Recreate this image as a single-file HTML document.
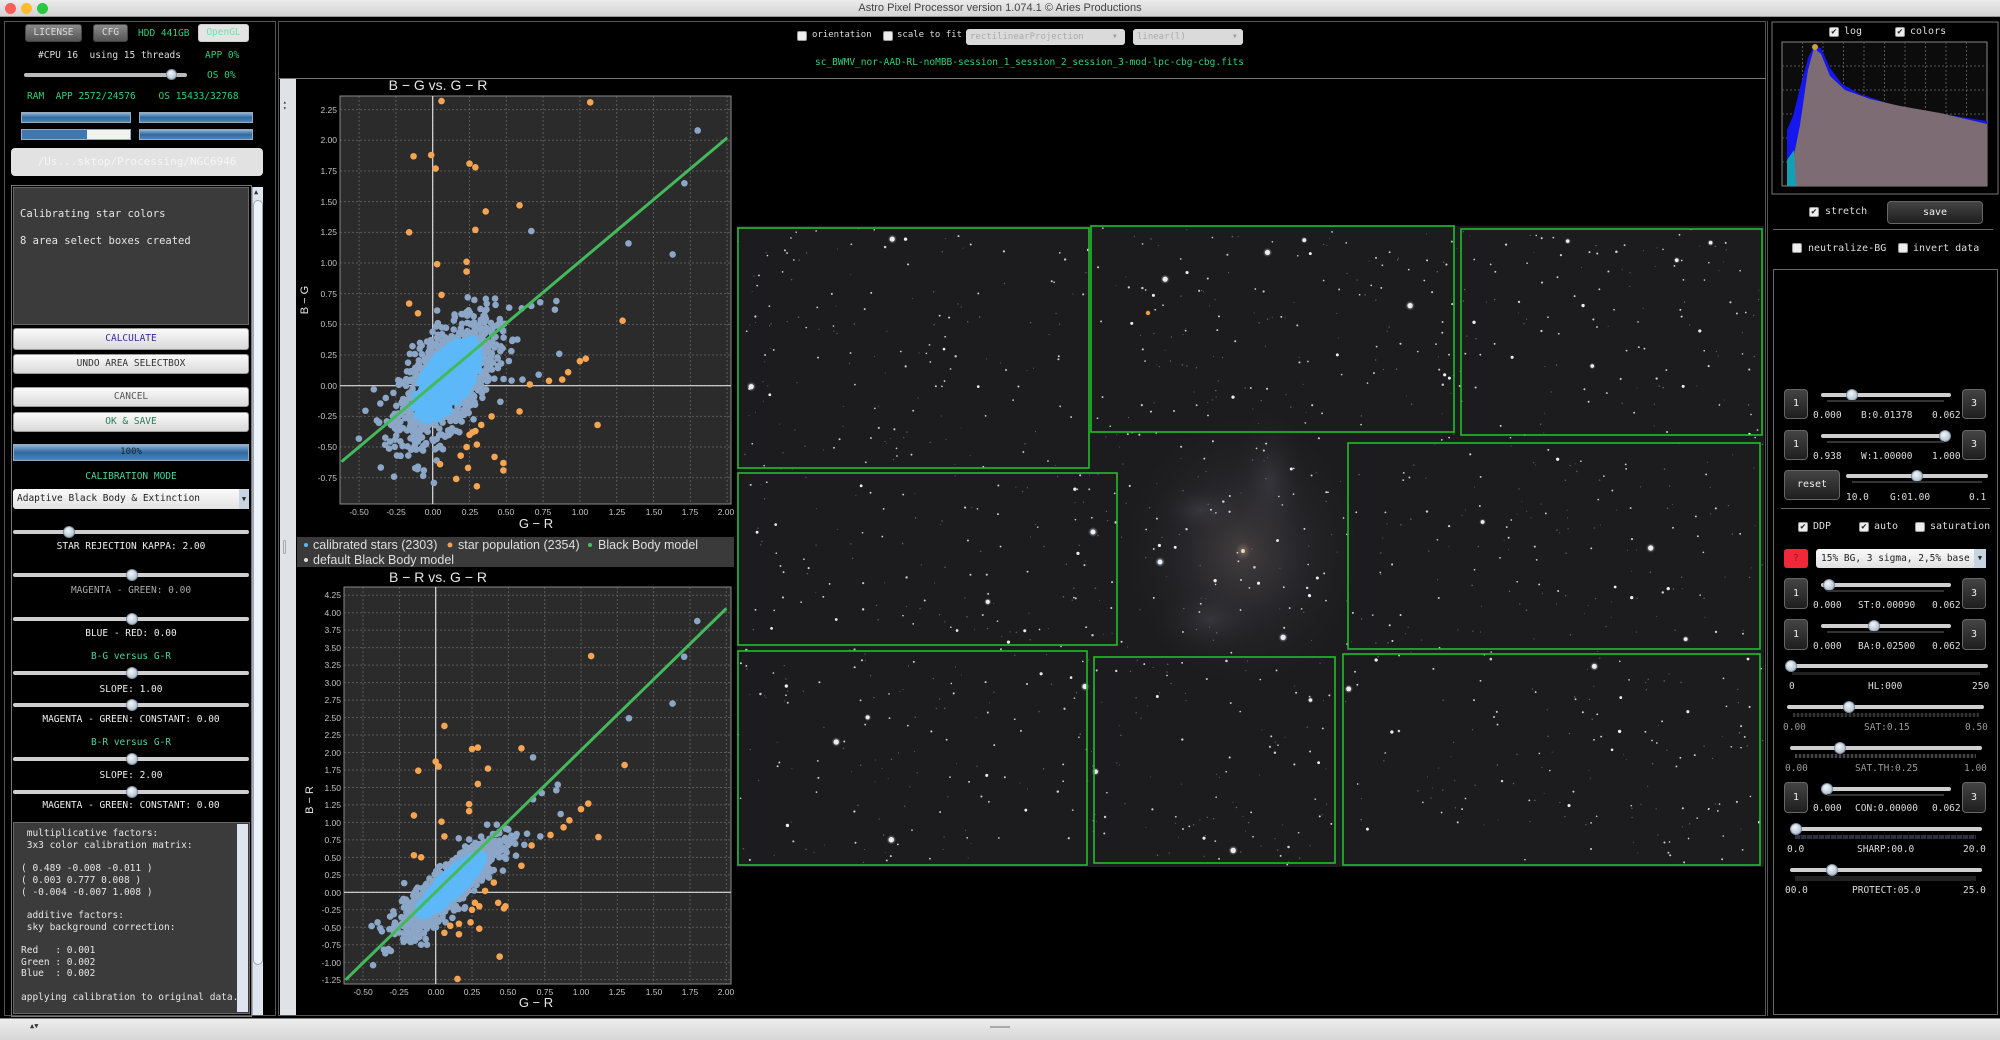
<!DOCTYPE html>
<html><head><meta charset="utf-8">
<style>
*{margin:0;padding:0;box-sizing:border-box}
body{width:2000px;height:1040px;overflow:hidden;background:#000;position:relative;font-family:"DejaVu Sans Mono","Liberation Mono",monospace;font-size:9.5px;color:#ddd}
.a{position:absolute}
.btn{position:absolute;background:linear-gradient(#fafafa,#d9d9d9);border:1px solid #9a9a9a;border-radius:3px;color:#333;text-align:center;font-size:9.5px}
.dk{position:absolute;background:linear-gradient(#444,#1e1e1e);border:1px solid #666;border-radius:4px;color:#eee;text-align:center;font-size:10px}
.c{position:absolute;text-align:center;white-space:nowrap}
.tr{position:absolute;height:4px;background:#cfcfcf;border-radius:2px}
.kn{position:absolute;width:12px;height:12px;border-radius:6px;background:radial-gradient(circle at 40% 35%,#f2f6fa,#9fb0c2);border:1px solid #7d8ea0}
.cb{position:absolute;width:10px;height:10px;background:#eee;border:1px solid #999;border-radius:2px;color:#222;font-size:9px;line-height:9px;text-align:center}
.bar{position:absolute;height:11px;background:linear-gradient(#8fb3d6,#2f6aa0 50%,#4a85bd);border:1px solid #9ab}
</style></head><body>

<div class="a" style="left:0;top:0;width:2000px;height:17px;background:linear-gradient(#ececec,#d3d3d3);border-bottom:1px solid #999"></div>
<div class="a" style="left:5px;top:3px;width:11px;height:11px;border-radius:6px;background:#fc5f57"></div>
<div class="a" style="left:21px;top:3px;width:11px;height:11px;border-radius:6px;background:#fdbc2e"></div>
<div class="a" style="left:37px;top:3px;width:11px;height:11px;border-radius:6px;background:#28c840"></div>
<div class="c" style="left:0;width:2000px;top:2px;font-family:'Liberation Sans',sans-serif;font-size:11px;color:#444">Astro Pixel Processor version 1.074.1 © Aries Productions</div>

<div class="a" style="left:0;top:1018px;width:2000px;height:22px;background:linear-gradient(#ececec,#d8d8d8);border-top:1px solid #888"></div>
<div class="a" style="left:30px;top:1022px;font-size:7px;color:#333">▲▼</div>
<div class="a" style="left:990px;top:1026px;width:20px;height:2px;background:#aaa"></div>

<div class="a" style="left:4px;top:21px;width:272px;height:995px;border:1px solid #555"></div>
<div class="btn" style="left:25px;top:24px;width:57px;height:18px;line-height:16px;background:linear-gradient(#8a8a8a,#555);color:#ddd;border-color:#444">LICENSE</div>
<div class="btn" style="left:93px;top:24px;width:35px;height:18px;line-height:16px;background:linear-gradient(#8a8a8a,#555);color:#ddd;border-color:#444">CFG</div>
<div class="a" style="left:138px;top:28px;color:#2fd07a">HDD 441GB</div>
<div class="btn" style="left:198px;top:24px;width:51px;height:18px;line-height:16px;background:#e4e4e4;color:#6fe0b0;border-color:#ccc">OpenGL</div>
<div class="a" style="left:38px;top:50px;color:#ddd">#CPU 16&nbsp; using 15 threads</div>
<div class="a" style="left:205px;top:50px;color:#2fd07a">APP 0%</div>
<div class="tr" style="left:24px;top:73px;width:163px;background:#bbb"></div>
<div class="kn" style="left:166px;top:69px;width:11px;height:11px"></div>
<div class="a" style="left:207px;top:70px;color:#2fd07a">OS 0%</div>
<div class="a" style="left:27px;top:91px;color:#2fd07a">RAM&nbsp; APP 2572/24576&nbsp;&nbsp;&nbsp; OS 15433/32768</div>
<div class="bar" style="left:21px;top:112px;width:110px"></div>
<div class="bar" style="left:139px;top:112px;width:114px"></div>
<div class="bar" style="left:21px;top:129px;width:110px;background:linear-gradient(90deg,#3f78b0 0,#3f78b0 60%,#f2f2f2 60%)"></div>
<div class="bar" style="left:139px;top:129px;width:114px"></div>
<div class="a" style="left:11px;top:148px;width:252px;height:28px;background:#e2e2e2;border-radius:4px;color:#f6f6f6;font-size:11px;line-height:28px;text-align:center">/Us...sktop/Processing/NGC6946</div>

<div class="a" style="left:11px;top:185px;width:241px;height:832px;border:1px solid #777"></div>
<div class="a" style="left:13px;top:187px;width:236px;height:138px;background:#3b3b3b;border:1px solid #666"></div>
<div class="a" style="left:20px;top:208px;font-size:10.5px;color:#e6e6e6">Calibrating star colors</div>
<div class="a" style="left:20px;top:235px;font-size:10.5px;color:#e6e6e6">8 area select boxes created</div>
<div class="a" style="left:252px;top:187px;width:11px;height:828px;background:#dfe5ee;border-left:1px solid #aab"></div>
<div class="a" style="left:253px;top:200px;width:10px;height:765px;background:#eef3f9;border:1px solid #98a8bb;border-radius:5px"></div>
<div class="a" style="left:254px;top:188px;font-size:7px;color:#333">▲</div>

<div class="btn" style="left:13px;top:328px;width:236px;height:22px;line-height:20px;color:#3b2aa0">CALCULATE</div>
<div class="btn" style="left:13px;top:354px;width:236px;height:20px;line-height:18px">UNDO AREA SELECTBOX</div>
<div class="btn" style="left:13px;top:387px;width:236px;height:20px;line-height:18px;color:#555">CANCEL</div>
<div class="btn" style="left:13px;top:412px;width:236px;height:20px;line-height:18px;color:#2a7a5a">OK &amp; SAVE</div>
<div class="bar" style="left:13px;top:444px;width:236px;height:17px;text-align:center;line-height:15px;color:#123;font-size:9px">100%</div>
<div class="c" style="left:13px;width:236px;top:471px;color:#4fd0a0">CALIBRATION MODE</div>
<div class="a" style="left:13px;top:489px;width:236px;height:20px;background:linear-gradient(#fafafa,#e2e2e2);border-radius:3px;color:#222;font-size:9.5px;line-height:20px;padding-left:4px">Adaptive Black Body &amp; Extinction</div>
<div class="a" style="left:239px;top:489px;width:10px;height:20px;background:#c8d4e2;font-size:7px;color:#222;line-height:20px;text-align:center">▼</div>

<div class="tr" style="left:13px;top:530px;width:236px"></div><div class="kn" style="left:63px;top:526px"></div>
<div class="c" style="left:13px;width:236px;top:541px;color:#eee">STAR REJECTION KAPPA: 2.00</div>
<div class="tr" style="left:13px;top:573px;width:236px"></div><div class="kn" style="left:126px;top:569px"></div>
<div class="c" style="left:13px;width:236px;top:585px;color:#aaa">MAGENTA - GREEN: 0.00</div>
<div class="tr" style="left:13px;top:617px;width:236px"></div><div class="kn" style="left:126px;top:613px"></div>
<div class="c" style="left:13px;width:236px;top:628px;color:#eee">BLUE - RED: 0.00</div>
<div class="c" style="left:13px;width:236px;top:651px;color:#4fd0a0">B-G versus G-R</div>
<div class="tr" style="left:13px;top:671px;width:236px"></div><div class="kn" style="left:126px;top:667px"></div>
<div class="c" style="left:13px;width:236px;top:684px;color:#eee">SLOPE: 1.00</div>
<div class="tr" style="left:13px;top:703px;width:236px"></div><div class="kn" style="left:126px;top:699px"></div>
<div class="c" style="left:13px;width:236px;top:714px;color:#eee">MAGENTA - GREEN: CONSTANT: 0.00</div>
<div class="c" style="left:13px;width:236px;top:737px;color:#4fd0a0">B-R versus G-R</div>
<div class="tr" style="left:13px;top:757px;width:236px"></div><div class="kn" style="left:126px;top:753px"></div>
<div class="c" style="left:13px;width:236px;top:770px;color:#eee">SLOPE: 2.00</div>
<div class="tr" style="left:13px;top:790px;width:236px"></div><div class="kn" style="left:126px;top:786px"></div>
<div class="c" style="left:13px;width:236px;top:800px;color:#eee">MAGENTA - GREEN: CONSTANT: 0.00</div>

<div class="a" style="left:13px;top:822px;width:237px;height:192px;background:#3b3b3b;border:1px solid #666"></div>
<div class="a" style="left:237px;top:824px;width:11px;height:188px;background:#dfe5ee"></div>
<div class="a" style="left:21px;top:828px;font-size:9.5px;line-height:11.7px;color:#e6e6e6;white-space:pre"> multiplicative factors:
 3x3 color calibration matrix:

( 0.489 -0.008 -0.011 )
( 0.003 0.777 0.008 )
( -0.004 -0.007 1.008 )

 additive factors:
 sky background correction:

Red   : 0.001
Green : 0.002
Blue  : 0.002

applying calibration to original data..</div>

<div class="a" style="left:278px;top:21px;width:1488px;height:995px;border:1px solid #555"></div>
<div class="cb" style="left:797px;top:31px"></div>
<div class="a" style="left:812px;top:30px;font-size:9px;color:#ddd">orientation</div>
<div class="cb" style="left:883px;top:31px"></div>
<div class="a" style="left:897px;top:30px;font-size:9px;color:#ddd">scale to fit</div>
<div class="a" style="left:966px;top:29px;width:159px;height:16px;background:#dadada;border-radius:3px;color:#aaa;font-size:9px;line-height:16px;padding-left:4px">rectilinearProjection</div>
<div class="a" style="left:1113px;top:29px;font-size:6px;color:#999;line-height:16px">▼</div>
<div class="a" style="left:1133px;top:29px;width:110px;height:16px;background:#dadada;border-radius:3px;color:#aaa;font-size:9px;line-height:16px;padding-left:4px">linear(l)</div>
<div class="a" style="left:1233px;top:29px;font-size:6px;color:#999;line-height:16px">▼</div>
<div class="a" style="left:815px;top:57px;font-size:9.5px;color:#2fd07a">sc_BWMV_nor-AAD-RL-noMBB-session_1_session_2_session_3-mod-lpc-cbg-cbg.fits</div>
<div class="a" style="left:279px;top:78px;width:1487px;height:1px;background:#777"></div>
<div class="a" style="left:280px;top:79px;width:16px;height:936px;background:#dfe2e6"></div>
<div class="a" style="left:283px;top:100px;font-size:6px;color:#333;line-height:6px">▴<br>▾</div>
<div class="a" style="left:283px;top:540px;width:3px;height:14px;border:1px solid #aaa;border-radius:2px"></div>

<svg id="g" class="a" style="left:0;top:0" width="2000" height="1040" xmlns="http://www.w3.org/2000/svg" font-family="Liberation Sans, sans-serif">
<rect x="340" y="96" width="391" height="408" fill="#2b2b2b"/>
<rect x="344" y="587" width="387" height="397" fill="#2b2b2b"/>
<g id="grid"></g>
<g id="dots"></g>
<text x="438" y="90" fill="#e6e6e6" font-size="14" text-anchor="middle">B − G  vs.  G − R</text>
<text x="438" y="582" fill="#e6e6e6" font-size="14" text-anchor="middle">B − R  vs.  G − R</text>
<text x="536" y="528" fill="#e6e6e6" font-size="13" text-anchor="middle">G − R</text>
<text x="536" y="1007" fill="#e6e6e6" font-size="13" text-anchor="middle">G − R</text>
<text transform="translate(308,300) rotate(-90)" fill="#e6e6e6" font-size="11" text-anchor="middle">B − G</text>
<text transform="translate(313,800) rotate(-90)" fill="#e6e6e6" font-size="11" text-anchor="middle">B − R</text>
<g fill="#c4c4c4" font-size="8.5" text-anchor="middle">
<text x="359" y="515">-0.50</text><text x="396" y="515">-0.25</text><text x="433" y="515">0.00</text><text x="470" y="515">0.25</text><text x="506" y="515">0.50</text><text x="543" y="515">0.75</text><text x="580" y="515">1.00</text><text x="617" y="515">1.25</text><text x="654" y="515">1.50</text><text x="690" y="515">1.75</text><text x="726" y="515">2.00</text>
<text x="363" y="995">-0.50</text><text x="399" y="995">-0.25</text><text x="436" y="995">0.00</text><text x="472" y="995">0.25</text><text x="508" y="995">0.50</text><text x="545" y="995">0.75</text><text x="581" y="995">1.00</text><text x="617" y="995">1.25</text><text x="654" y="995">1.50</text><text x="690" y="995">1.75</text><text x="726" y="995">2.00</text>
</g>
<g fill="#c4c4c4" font-size="8.5" text-anchor="end">
<text x="337" y="113">2.25</text><text x="337" y="143">2.00</text><text x="337" y="174">1.75</text><text x="337" y="205">1.50</text><text x="337" y="235">1.25</text><text x="337" y="266">1.00</text><text x="337" y="297">0.75</text><text x="337" y="327">0.50</text><text x="337" y="358">0.25</text><text x="337" y="389">0.00</text><text x="337" y="419">-0.25</text><text x="337" y="450">-0.50</text><text x="337" y="481">-0.75</text>
<text x="341" y="598">4.25</text><text x="341" y="616">4.00</text><text x="341" y="633">3.75</text><text x="341" y="651">3.50</text><text x="341" y="668">3.25</text><text x="341" y="686">3.00</text><text x="341" y="703">2.75</text><text x="341" y="721">2.50</text><text x="341" y="738">2.25</text><text x="341" y="756">2.00</text><text x="341" y="773">1.75</text><text x="341" y="791">1.50</text><text x="341" y="808">1.25</text><text x="341" y="826">1.00</text><text x="341" y="843">0.75</text><text x="341" y="861">0.50</text><text x="341" y="878">0.25</text><text x="341" y="896">0.00</text><text x="341" y="913">-0.25</text><text x="341" y="931">-0.50</text><text x="341" y="948">-0.75</text><text x="341" y="966">-1.00</text><text x="341" y="983">-1.25</text>
</g>
<rect x="297" y="537" width="437" height="30" fill="#3a3a3a"/>
<g font-size="12.5" fill="#dedede">
<circle cx="306" cy="545" r="2" fill="#5cb6f7"/><text x="313" y="549">calibrated stars (2303)</text>
<circle cx="450" cy="545" r="2.5" fill="#f0a050"/><text x="458" y="549">star population (2354)</text>
<circle cx="590" cy="545" r="2" fill="#4cc060"/><text x="598" y="549">Black Body model</text>
<circle cx="306" cy="560" r="2" fill="#ddd"/><text x="313" y="564">default Black Body model</text>
</g>
<rect x="737" y="226" width="1027" height="641" fill="#1c1c1e"/>
<defs><radialGradient id="gal"><stop offset="0" stop-color="#a89080" stop-opacity=".7"/><stop offset=".06" stop-color="#6a6060" stop-opacity=".45"/><stop offset=".45" stop-color="#3a3a42" stop-opacity=".35"/><stop offset="1" stop-color="#1c1c1e" stop-opacity="0"/></radialGradient>
<radialGradient id="arm"><stop offset="0" stop-color="#55555e" stop-opacity=".35"/><stop offset="1" stop-color="#1c1c1e" stop-opacity="0"/></radialGradient>
<radialGradient id="st"><stop offset="0" stop-color="#fff" stop-opacity=".7"/><stop offset="1" stop-color="#fff" stop-opacity="0"/></radialGradient></defs>
<ellipse cx="1243" cy="551" rx="130" ry="150" fill="url(#gal)"/>
<ellipse cx="1270" cy="480" rx="40" ry="80" fill="url(#arm)"/>
<ellipse cx="1210" cy="620" rx="60" ry="40" fill="url(#arm)"/>
<ellipse cx="1200" cy="510" rx="50" ry="30" fill="url(#arm)"/>
<g id="stars"></g>
<g fill="none" stroke="#1fbf2a" stroke-width="1.6">
<rect x="738" y="228" width="351" height="240"/>
<rect x="1091" y="226" width="363" height="206"/>
<rect x="1461" y="229" width="301" height="206"/>
<rect x="738" y="473" width="379" height="172"/>
<rect x="1348" y="443" width="412" height="206"/>
<rect x="738" y="651" width="349" height="214"/>
<rect x="1094" y="657" width="241" height="206"/>
<rect x="1343" y="654" width="417" height="211"/>
</g>
<rect x="1772" y="22" width="226" height="172" fill="#000" stroke="#777"/>
<rect x="1782" y="42" width="205" height="144" fill="#0c0c0c" stroke="#888"/>
<g id="hg" stroke="#555" stroke-dasharray="2,2" stroke-width="1"></g>
<polygon fill="#1616ee" points="1787,186 1787,130 1793,116 1800,88 1808,58 1814,46 1821,48 1830,68 1842,84 1860,94 1890,104 1930,112 1987,121 1987,186"/>
<polygon fill="#7e6c74" points="1791,186 1793,160 1800,125 1808,70 1814,48 1821,54 1830,76 1845,90 1870,99 1900,106 1940,113 1987,124 1987,186"/>
<polygon fill="#12a0b4" points="1787,186 1787,160 1794,150 1796,186"/>
<circle cx="1815" cy="47" r="3" fill="#c8a040"/>
</svg>

<div class="a" style="left:1767px;top:21px;width:232px;height:995px;border-left:1px solid #555"></div>
<div class="cb" style="left:1829px;top:27px">✔</div><div class="a" style="left:1844px;top:26px;font-size:10px">log</div>
<div class="cb" style="left:1895px;top:27px">✔</div><div class="a" style="left:1910px;top:26px;font-size:10px">colors</div>
<div class="cb" style="left:1809px;top:207px">✔</div><div class="a" style="left:1825px;top:206px;font-size:10px">stretch</div>
<div class="dk" style="left:1887px;top:201px;width:96px;height:23px;line-height:21px">save</div>
<div class="a" style="left:1773px;top:229px;width:220px;height:1px;background:#666"></div>
<div class="cb" style="left:1792px;top:243px"></div><div class="a" style="left:1808px;top:243px;font-size:10px">neutralize-BG</div>
<div class="cb" style="left:1898px;top:243px"></div><div class="a" style="left:1913px;top:243px;font-size:10px">invert data</div>
<div class="a" style="left:1773px;top:269px;width:225px;height:746px;border:1px solid #666"></div>

<div class="dk" style="left:1784px;top:389px;width:24px;height:30px;line-height:28px">1</div>
<div class="dk" style="left:1962px;top:389px;width:24px;height:30px;line-height:28px">3</div>
<div class="tr" style="left:1821px;top:393px;width:130px"></div><div class="kn" style="left:1846px;top:389px"></div>
<div class="a" style="left:1827px;top:400px;width:117px;height:2px;background:#333"></div>
<div class="a" style="left:1813px;top:410px;font-size:9.5px">0.000</div><div class="a" style="left:1861px;top:410px;font-size:9.5px">B:0.01378</div><div class="a" style="left:1932px;top:410px;font-size:9.5px">0.062</div>
<div class="dk" style="left:1784px;top:430px;width:24px;height:30px;line-height:28px">1</div>
<div class="dk" style="left:1962px;top:430px;width:24px;height:30px;line-height:28px">3</div>
<div class="tr" style="left:1821px;top:434px;width:130px"></div><div class="kn" style="left:1939px;top:430px"></div>
<div class="a" style="left:1827px;top:441px;width:117px;height:2px;background:#333"></div>
<div class="a" style="left:1813px;top:451px;font-size:9.5px">0.938</div><div class="a" style="left:1861px;top:451px;font-size:9.5px">W:1.00000</div><div class="a" style="left:1932px;top:451px;font-size:9.5px">1.000</div>
<div class="dk" style="left:1784px;top:470px;width:56px;height:30px;line-height:28px">reset</div>
<div class="tr" style="left:1846px;top:474px;width:142px"></div><div class="kn" style="left:1911px;top:470px"></div>
<div class="a" style="left:1852px;top:481px;width:130px;height:2px;background:#333"></div>
<div class="a" style="left:1846px;top:492px;font-size:9.5px">10.0</div><div class="a" style="left:1890px;top:492px;font-size:9.5px">G:01.00</div><div class="a" style="left:1969px;top:492px;font-size:9.5px">0.1</div>
<div class="a" style="left:1781px;top:508px;width:209px;height:1px;background:#666"></div>

<div class="cb" style="left:1798px;top:522px">✔</div><div class="a" style="left:1813px;top:521px;font-size:10px">DDP</div>
<div class="cb" style="left:1859px;top:522px">✔</div><div class="a" style="left:1874px;top:521px;font-size:10px">auto</div>
<div class="cb" style="left:1915px;top:522px"></div><div class="a" style="left:1930px;top:521px;font-size:10px">saturation</div>
<div class="a" style="left:1784px;top:549px;width:24px;height:19px;background:#f0283a;border-radius:3px;color:#a01020;text-align:center;line-height:19px">?</div>
<div class="a" style="left:1816px;top:549px;width:170px;height:19px;background:linear-gradient(#fafafa,#e0e0e0);border-radius:3px;color:#222;font-size:9.5px;line-height:19px;padding-left:5px">15% BG, 3 sigma, 2,5% base</div>
<div class="a" style="left:1974px;top:549px;width:12px;height:19px;background:#c8d4e2;font-size:7px;color:#222;line-height:19px;text-align:center">▼</div>

<div class="dk" style="left:1784px;top:578px;width:24px;height:31px;line-height:29px">1</div>
<div class="dk" style="left:1962px;top:578px;width:24px;height:31px;line-height:29px">3</div>
<div class="tr" style="left:1821px;top:583px;width:130px"></div><div class="kn" style="left:1823px;top:579px"></div>
<div class="a" style="left:1827px;top:590px;width:117px;height:2px;background:#333"></div>
<div class="a" style="left:1813px;top:600px;font-size:9.5px">0.000</div><div class="a" style="left:1858px;top:600px;font-size:9.5px">ST:0.00090</div><div class="a" style="left:1932px;top:600px;font-size:9.5px">0.062</div>
<div class="dk" style="left:1784px;top:619px;width:24px;height:31px;line-height:29px">1</div>
<div class="dk" style="left:1962px;top:619px;width:24px;height:31px;line-height:29px">3</div>
<div class="tr" style="left:1821px;top:624px;width:130px"></div><div class="kn" style="left:1868px;top:620px"></div>
<div class="a" style="left:1827px;top:631px;width:117px;height:2px;background:#333"></div>
<div class="a" style="left:1813px;top:641px;font-size:9.5px">0.000</div><div class="a" style="left:1858px;top:641px;font-size:9.5px">BA:0.02500</div><div class="a" style="left:1932px;top:641px;font-size:9.5px">0.062</div>

<div class="tr" style="left:1786px;top:664px;width:202px"></div><div class="kn" style="left:1785px;top:660px"></div>
<div class="a" style="left:1792px;top:672px;width:188px;height:3px;background:#222"></div>
<div class="a" style="left:1789px;top:681px;font-size:9.5px">0</div><div class="a" style="left:1868px;top:681px;font-size:9.5px">HL:000</div><div class="a" style="left:1972px;top:681px;font-size:9.5px">250</div>
<div class="tr" style="left:1787px;top:705px;width:197px"></div><div class="kn" style="left:1843px;top:701px"></div>
<div class="a" style="left:1793px;top:713px;width:186px;height:4px;background:repeating-linear-gradient(90deg,#333 0 2px,#111 2px 4px)"></div>
<div class="a" style="left:1783px;top:722px;font-size:9.5px;color:#999">0.00</div><div class="a" style="left:1864px;top:722px;font-size:9.5px;color:#999">SAT:0.15</div><div class="a" style="left:1965px;top:722px;font-size:9.5px;color:#999">0.50</div>
<div class="tr" style="left:1790px;top:746px;width:192px"></div><div class="kn" style="left:1834px;top:742px"></div>
<div class="a" style="left:1795px;top:754px;width:181px;height:4px;background:repeating-linear-gradient(90deg,#444 0 2px,#111 2px 4px)"></div>
<div class="a" style="left:1785px;top:763px;font-size:9.5px;color:#999">0.00</div><div class="a" style="left:1855px;top:763px;font-size:9.5px;color:#999">SAT.TH:0.25</div><div class="a" style="left:1964px;top:763px;font-size:9.5px;color:#999">1.00</div>

<div class="dk" style="left:1784px;top:782px;width:24px;height:31px;line-height:29px">1</div>
<div class="dk" style="left:1962px;top:782px;width:24px;height:31px;line-height:29px">3</div>
<div class="tr" style="left:1821px;top:787px;width:130px"></div><div class="kn" style="left:1821px;top:783px"></div>
<div class="a" style="left:1827px;top:794px;width:117px;height:2px;background:#333"></div>
<div class="a" style="left:1813px;top:803px;font-size:9.5px">0.000</div><div class="a" style="left:1855px;top:803px;font-size:9.5px">CON:0.00000</div><div class="a" style="left:1932px;top:803px;font-size:9.5px">0.062</div>
<div class="tr" style="left:1790px;top:827px;width:192px"></div><div class="kn" style="left:1790px;top:823px"></div>
<div class="a" style="left:1795px;top:835px;width:181px;height:4px;background:repeating-linear-gradient(90deg,#2a3040 0 5px,#111 5px 6px)"></div>
<div class="a" style="left:1787px;top:844px;font-size:9.5px">0.0</div><div class="a" style="left:1857px;top:844px;font-size:9.5px">SHARP:00.0</div><div class="a" style="left:1963px;top:844px;font-size:9.5px">20.0</div>
<div class="tr" style="left:1790px;top:868px;width:192px"></div><div class="kn" style="left:1826px;top:864px"></div>
<div class="a" style="left:1795px;top:876px;width:181px;height:5px;background:#222"></div>
<div class="a" style="left:1785px;top:885px;font-size:9.5px">00.0</div><div class="a" style="left:1852px;top:885px;font-size:9.5px">PROTECT:05.0</div><div class="a" style="left:1963px;top:885px;font-size:9.5px">25.0</div>

<script>
(function(){
var NS="http://www.w3.org/2000/svg";
var s=12345;function r(){s=(s*1103515245+12345)&0x7fffffff;return s/0x7fffffff;}
function g(){var u=r()||1e-6,v=r();return Math.sqrt(-2*Math.log(u))*Math.cos(2*Math.PI*v);}
function el(p,t,a){var e=document.createElementNS(NS,t);for(var k in a)e.setAttribute(k,a[k]);p.appendChild(e);return e;}
var grid=document.getElementById('grid'),dots=document.getElementById('dots');
var P=[{x0:432.7,sx:147.2,y0:385.7,sy:122.7,L:340,R:731,T:96,B:504,ymin:-0.75,ymax:2.25,k:1.0},
       {x0:435.7,sx:145.3,y0:892.3,sy:69.9,L:344,R:731,T:587,B:984,ymin:-1.25,ymax:4.25,k:2.02}];
P.forEach(function(p){
 for(var v=-0.5;v<=2.001;v+=0.25){var x=p.x0+v*p.sx;el(grid,'line',{x1:x,x2:x,y1:p.T,y2:p.B,stroke:'#5a5a5a','stroke-dasharray':'2,2'});}
 for(var v=p.ymin;v<=p.ymax+0.001;v+=0.25){var y=p.y0-v*p.sy;el(grid,'line',{x1:p.L,x2:p.R,y1:y,y2:y,stroke:'#5a5a5a','stroke-dasharray':'2,2'});}
 el(grid,'rect',{x:p.L,y:p.T,width:p.R-p.L,height:p.B-p.T,fill:'none',stroke:'#888'});
 el(grid,'line',{x1:p.x0,x2:p.x0,y1:p.T,y2:p.B,stroke:'#ddd','stroke-width':1.2});
 el(grid,'line',{x1:p.L,x2:p.R,y1:p.y0,y2:p.y0,stroke:'#ddd','stroke-width':1.2});
});
var O1=[[0.06,2.32],[1.07,2.31],[-0.13,1.87],[-0.01,1.88],[0.02,1.77],[0.25,1.81],[0.29,1.78],[0.59,1.47],[0.36,1.42],[-0.16,1.25],[0.29,1.27],[0.03,0.99],[0.23,1.01],[0.23,0.93],[0.06,0.74],[-0.16,0.67],[-0.1,0.59],[1.29,0.53],[1.0,0.2],[1.04,0.22],[0.92,0.11],[0.88,0.05],[0.79,0.04],[0.66,0.01],[0.59,-0.21],[1.12,-0.32],[0.4,-0.25],[0.33,-0.32],[0.27,-0.38],[0.23,-0.5],[0.3,-0.48],[0.19,-0.57],[0.42,-0.58],[0.05,-0.64],[0.48,-0.63],[0.48,-0.69],[0.24,-0.67],[0.16,-0.76],[0.3,-0.82],[0.25,-0.4],[0.29,-0.37]];
var B1=[[1.8,2.08],[1.71,1.65],[0.67,1.26],[1.33,1.16],[1.63,1.07],[0.84,0.69],[0.83,0.62],[0.73,0.68],[0.67,0.65],[0.86,0.26],[0.72,0.09],[0.61,0.05],[-0.1,-0.66],[-0.06,-0.69],[-0.4,-0.03]];
var O2=[[1.07,3.38],[0.06,2.38],[0.25,2.05],[0.29,2.07],[0.59,2.06],[0,1.87],[0.02,1.8],[-0.12,1.74],[0.36,1.77],[0.29,1.55],[1.3,1.82],[0.23,1.26],[0.23,1.16],[-0.15,1.1],[0.04,1.01],[1.05,1.27],[1.0,1.19],[0.92,1.03],[0.88,0.93],[0.79,0.82],[1.12,0.79],[0.66,0.67],[0.06,0.8],[-0.15,0.53],[-0.1,0.5],[0.59,0.38],[0.4,0.14],[0.34,0.02],[0.27,-0.15],[0.3,-0.2],[0.25,-0.25],[0.43,-0.15],[0.48,-0.2],[0.47,-0.23],[0.24,-0.43],[0.16,-0.45],[0.1,-0.48],[0.3,-0.52],[0.06,-0.58],[0.16,-0.6],[0.44,-0.92],[0.15,-1.24]];
var B2=[[1.8,3.88],[1.71,3.37],[1.63,2.7],[1.33,2.49],[0.67,1.93],[0.84,1.54],[0.83,1.46],[0.73,1.42],[0.67,1.33],[0.86,1.12],[0.72,0.8],[0.61,0.68],[-0.4,-0.43],[-0.1,-0.75],[-0.06,-0.75]];
function draw(p,k,sdy,O,B){
 var pts=[];
 for(var i=0;i<1400;i++){var x=0.1+0.16*g();var y=k*(x-0.1)*0.85+0.05*k+sdy*g();pts.push([x,y]);}
 pts.forEach(function(q){el(dots,'circle',{cx:p.x0+q[0]*p.sx,cy:p.y0-q[1]*p.sy,r:3.3,fill:'#8ba6c6'});});
 pts.forEach(function(q){var dx=(q[0]-0.1)/0.16;var dy=(q[1]-(k*(q[0]-0.1)*0.85+0.05*k))/sdy;if(dx*dx+dy*dy<2.2)el(dots,'circle',{cx:p.x0+q[0]*p.sx,cy:p.y0-q[1]*p.sy,r:2.8,fill:'#5cb8f8'});});
 B.forEach(function(q){el(dots,'circle',{cx:p.x0+q[0]*p.sx,cy:p.y0-q[1]*p.sy,r:3.3,fill:'#8ba6c6'});});
 var x1=-0.62,x2=2.0;
 el(dots,'line',{x1:p.x0+x1*p.sx,y1:p.y0-(p.k*x1)*p.sy,x2:p.x0+x2*p.sx,y2:p.y0-(p.k*x2+0.02)*p.sy,stroke:'#44b85a','stroke-width':3});
 O.forEach(function(q){el(dots,'circle',{cx:p.x0+q[0]*p.sx,cy:p.y0-q[1]*p.sy,r:3.3,fill:'#f5a452'});});
}
draw(P[0],1.0,0.19,O1,B1);
draw(P[1],2.0,0.16,O2,B2);
var st=document.getElementById('stars');
for(var i=0;i<1300;i++){var x=738+r()*1025,y=227+r()*639;var m=r();var rr=m<0.88?0.45+r()*0.6:(m<0.985?1.0+r()*0.7:1.7+r()*1.0);
 if(rr>1.7)el(st,'circle',{cx:x,cy:y,r:rr*1.8,fill:'url(#st)'});
 var op=rr<0.8?0.55:(rr<1.3?0.85:1);
 el(st,'circle',{cx:x,cy:y,r:rr,fill:rr<0.8?'#9a9aa0':'#ececf2','fill-opacity':op});}
el(st,'circle',{cx:1148,cy:313,r:2.2,fill:'#f0a040'});
el(st,'circle',{cx:1093,cy:532,r:2.5,fill:'#cfe4ff'});el(st,'circle',{cx:1093,cy:532,r:5,fill:'url(#st)'});
el(st,'circle',{cx:1160,cy:562,r:2.5,fill:'#cfe4ff'});el(st,'circle',{cx:1160,cy:562,r:5,fill:'url(#st)'});
el(st,'circle',{cx:1243,cy:551,r:2,fill:'#e8d4b8'});
var hg=document.getElementById('hg');
for(var i=1;i<10;i++){var x=1782+i*20.5;el(hg,'line',{x1:x,x2:x,y1:42,y2:186});}
for(var i=1;i<6;i++){var y=42+i*24;el(hg,'line',{x1:1782,x2:1987,y1:y,y2:y});}
})();
</script>
</body></html>
